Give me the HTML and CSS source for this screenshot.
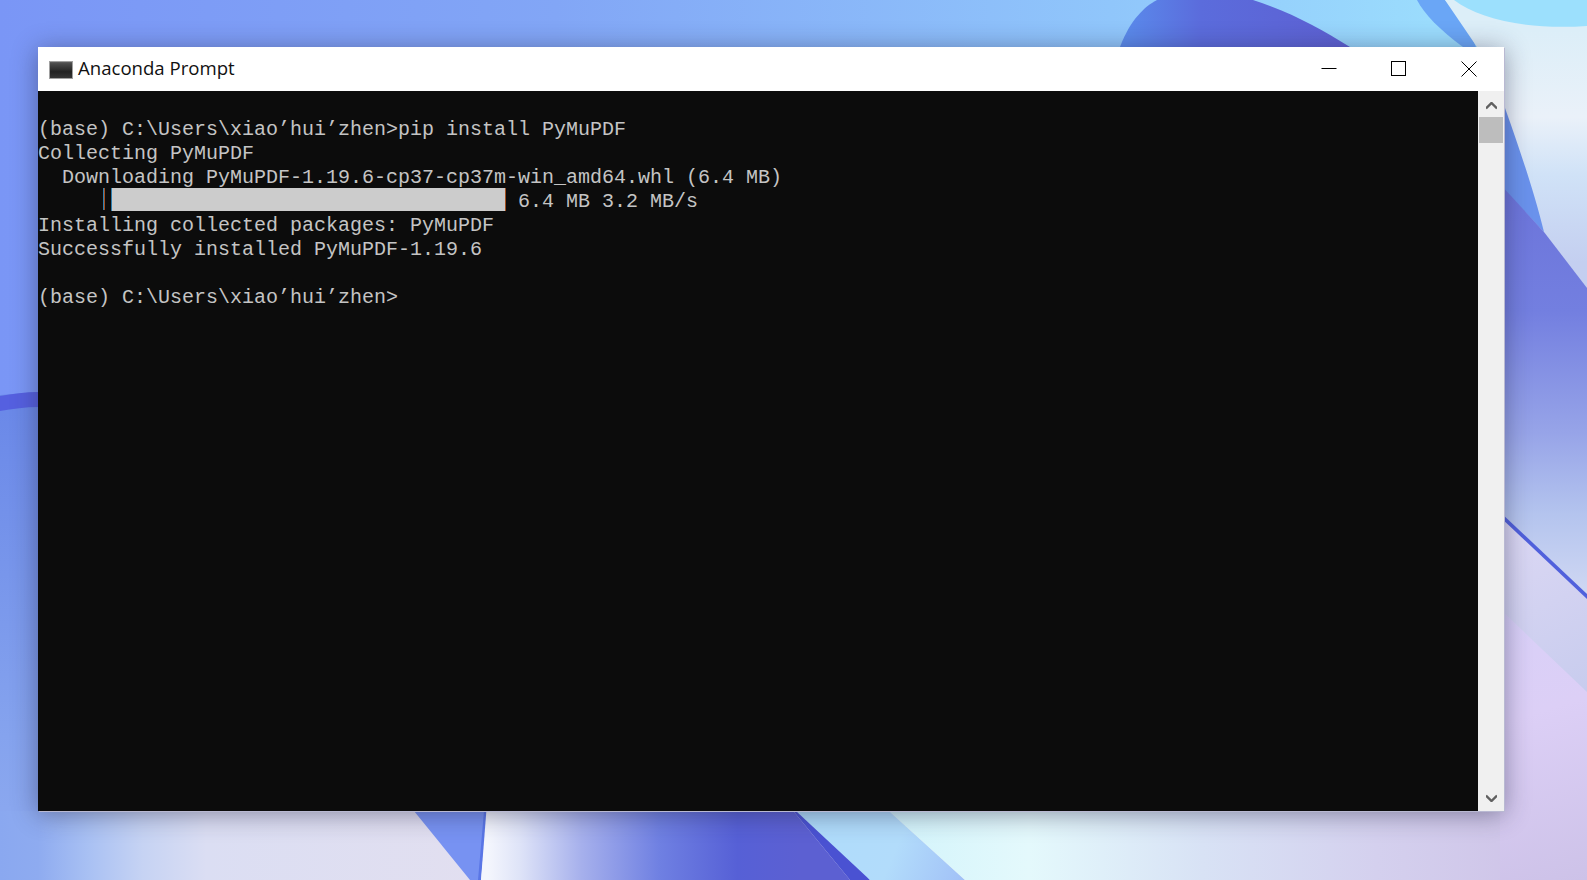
FILE: index.html
```html
<!DOCTYPE html>
<html lang="en">
<head>
<meta charset="utf-8">
<title>Anaconda Prompt</title>
<link rel="stylesheet" href="styles.css">
</head>
<body>
<svg class="wallpaper" viewBox="0 0 1587 880" width="1587" height="880" aria-hidden="true">
  <defs>
    <linearGradient id="top" x1="0" x2="1587" y1="0" y2="0" gradientUnits="userSpaceOnUse">
      <stop offset="0" stop-color="#7a96f6"/><stop offset=".35" stop-color="#82a6f6"/><stop offset=".7" stop-color="#90c6fb"/><stop offset=".9" stop-color="#9bdcfd"/>
    </linearGradient>
    <linearGradient id="left" x1="0" x2="0" y1="400" y2="880" gradientUnits="userSpaceOnUse">
      <stop offset="0" stop-color="#6a88e8"/><stop offset=".7" stop-color="#85a3ee"/><stop offset="1" stop-color="#8fabf0"/>
    </linearGradient>
    <linearGradient id="bottom" x1="0" x2="1587" y1="0" y2="0" gradientUnits="userSpaceOnUse">
      <stop offset="0" stop-color="#8aa8f0"/><stop offset=".024" stop-color="#8eabf0"/><stop offset=".055" stop-color="#a8c0f3"/><stop offset=".09" stop-color="#c6d3f3"/><stop offset=".13" stop-color="#dbdef3"/><stop offset=".3" stop-color="#e2dff0"/>
    </linearGradient>
    <linearGradient id="mid" x1="488" x2="800" y1="0" y2="0" gradientUnits="userSpaceOnUse">
      <stop offset="0" stop-color="#f4f6fd"/><stop offset=".1" stop-color="#dfe4f8"/><stop offset=".3" stop-color="#a6b0ec"/><stop offset=".55" stop-color="#6f80e2"/><stop offset=".8" stop-color="#5660d6"/><stop offset="1" stop-color="#5c60d2"/>
    </linearGradient>
    <linearGradient id="sky" x1="796" x2="960" y1="811" y2="880" gradientUnits="userSpaceOnUse">
      <stop offset="0" stop-color="#aedcfb"/><stop offset=".6" stop-color="#b2dcfb"/><stop offset="1" stop-color="#a2c2f7"/>
    </linearGradient>
    <linearGradient id="foot" x1="889" x2="1587" y1="0" y2="0" gradientUnits="userSpaceOnUse">
      <stop offset="0" stop-color="#d2f4fb"/><stop offset=".2" stop-color="#e4f9fc"/><stop offset=".45" stop-color="#d8e2f5"/><stop offset=".7" stop-color="#d4d0ee"/><stop offset="1" stop-color="#cdc0e6"/>
    </linearGradient>
    <linearGradient id="blob" x1="1120" x2="1350" y1="0" y2="0" gradientUnits="userSpaceOnUse">
      <stop offset="0" stop-color="#5a8cec"/><stop offset=".35" stop-color="#5b6cdc"/><stop offset="1" stop-color="#5d60d2"/>
    </linearGradient>
    <linearGradient id="pale" x1="0" x2="0" y1="30" y2="320" gradientUnits="userSpaceOnUse">
      <stop offset="0" stop-color="#dceef8"/><stop offset=".3" stop-color="#eaf1f9"/><stop offset=".5" stop-color="#d0e2f7"/><stop offset=".8" stop-color="#c4cff0"/><stop offset="1" stop-color="#c4cdf0"/>
    </linearGradient>
    <linearGradient id="violet" x1="0" x2="0" y1="190" y2="595" gradientUnits="userSpaceOnUse">
      <stop offset="0" stop-color="#6c74da"/><stop offset=".3" stop-color="#737fe0"/><stop offset=".6" stop-color="#97a4e8"/><stop offset=".8" stop-color="#b4c4ee"/><stop offset="1" stop-color="#d0d8f3"/>
    </linearGradient>
    <linearGradient id="lilac" x1="1504" x2="1587" y1="600" y2="880" gradientUnits="userSpaceOnUse">
      <stop offset="0" stop-color="#d8d0f8"/><stop offset=".4" stop-color="#dccff6"/><stop offset="1" stop-color="#cdc2e8"/>
    </linearGradient>
    <linearGradient id="haze" x1="1504" x2="1587" y1="520" y2="690" gradientUnits="userSpaceOnUse">
      <stop offset="0" stop-color="#dcd8f4"/><stop offset="1" stop-color="#c8ccee"/>
    </linearGradient>
  </defs>
  <rect width="1587" height="880" fill="url(#top)"/>
  <path d="M0 395 L38 392 L38 880 L0 880Z" fill="url(#left)"/>
  <path d="M0 396 C12 394 26 392 38 392 L38 407 C26 407 12 409 0 411Z" fill="#5560e0"/>
  <rect y="811" width="1587" height="69" fill="url(#bottom)"/>
  <path d="M414 811 L470 880 L480 880 L488 811Z" fill="#7792f2"/>
  <path d="M484 811 L488 811 L481 880 L478 880Z" fill="#5a76e6"/>
  <path d="M488 790 H776 L850 880 H481Z" fill="url(#mid)"/>
  <path d="M776 790 H796 L870 880 H850Z" fill="#4a52d2"/>
  <path d="M796 811 H889 L965 880 H870Z" fill="url(#sky)"/>
  <path d="M889 811 H1587 V880 H965Z" fill="url(#foot)"/>
  <path d="M1120 47 C1130 20 1145 6 1157 0 L1253 0 C1290 12 1320 28 1350 47Z" fill="url(#blob)"/>
  <path d="M1417 0 L1445 0 C1462 20 1472 35 1477 50 L1463 47 C1440 30 1424 14 1417 0Z" fill="#6aa6f6"/>
  <path d="M1445 0 H1587 V320 H1504 L1477 47Z" fill="url(#pale)"/>
  <path d="M1454 0 C1480 20 1530 30 1587 26 V0Z" fill="#9ce0fd"/>
  <path d="M1470 47 L1477 47 C1490 70 1500 90 1505 108 C1520 150 1535 195 1544 232 L1504 190Z" fill="#6a92ec"/>
  <path d="M1500 184 L1544 232 L1587 288 V600 L1500 515Z" fill="url(#violet)"/>
  <path d="M1500 515 L1587 597 V880 H1500Z" fill="url(#haze)"/>
  <path d="M1500 609 L1587 692 V880 H1500Z" fill="url(#lilac)"/>
  <path d="M1500 512 L1587 594 V599 L1500 517Z" fill="#5060dc"/>
</svg>

<main class="window">
  <header class="titlebar">
    <div class="app-icon"></div>
    <h1 class="title">Anaconda Prompt</h1>
    <div class="controls">
      <button class="control" aria-label="Minimize">
        <svg width="16" height="16" viewBox="0 0 16 16"><path d="M0.5 7.5H15.5" class="glyph"/></svg>
      </button>
      <button class="control" aria-label="Maximize">
        <svg width="16" height="16" viewBox="0 0 16 16"><rect x="0.5" y="0.5" width="14" height="14" class="glyph"/></svg>
      </button>
      <button class="control" aria-label="Close">
        <svg width="16" height="16" viewBox="0 0 16 16"><path d="M0.5 0.5L15.5 15.5M15.5 0.5L0.5 15.5" class="glyph"/></svg>
      </button>
    </div>
  </header>
  <div class="content">
    <section class="console">
      <div class="row"> </div>
      <div class="row">(base) C:\Users\xiao’hui’zhen&gt;pip install PyMuPDF</div>
      <div class="row">Collecting PyMuPDF</div>
      <div class="row">  Downloading PyMuPDF-1.19.6-cp37-cp37m-win_amd64.whl (6.4 MB)</div>
      <div class="row progress-row"><span class="pipe"></span><span class="bar"></span><span class="rate">6.4 MB 3.2 MB/s</span></div>
      <div class="row">Installing collected packages: PyMuPDF</div>
      <div class="row">Successfully installed PyMuPDF-1.19.6</div>
      <div class="row"> </div>
      <div class="row">(base) C:\Users\xiao’hui’zhen&gt;</div>
    </section>
    <aside class="scrollbar">
      <svg class="arrow arrow-up" width="11" height="8" viewBox="0 0 11 8"><path d="M0 6.5L5.5 1L11 6.5" class="chevron"/></svg>
      <div class="thumb"></div>
      <div class="track"></div>
      <svg class="arrow arrow-down" width="11" height="8" viewBox="0 0 11 8"><path d="M0 1.5L5.5 7L11 1.5" class="chevron"/></svg>
    </aside>
  </div>
</main>
</body>
</html>
```

FILE: styles.css
```css
html, body {
  margin: 0;
  padding: 0;
  width: 1587px;
  height: 880px;
  overflow: hidden;
  background: #7a96f6;
}

.wallpaper {
  position: absolute;
  left: 0;
  top: 0;
  display: block;
}

.window {
  position: absolute;
  left: 38px;
  top: 47px;
  width: 1466px;
  height: 764px;
  display: flex;
  flex-direction: column;
  background: #fff;
  box-shadow: 1px 1px 0 #b9b9d2, 0 3px 24px rgba(40, 40, 70, .48);
}

.titlebar {
  height: 44px;
  flex: none;
  display: flex;
  align-items: center;
  padding-left: 11px;
  background: #fff;
}

.app-icon {
  width: 24px;
  height: 18px;
  margin-top: 1px;
  background: linear-gradient(#6a6a6a 0, #4a4a4a 15%, #222 60%, #383838 100%);
  box-shadow: inset 0 0 0 1px #a0a0a0;
  flex: none;
}

.title {
  margin: 0 0 4px 5px;
  font: 400 18.6px "Open Sans", sans-serif;
  color: #111;
  flex: 1;
}

.controls {
  display: flex;
  flex: none;
}

.control {
  width: 70px;
  height: 44px;
  padding: 0;
  border: 0;
  background: none;
  display: flex;
  align-items: center;
  justify-content: center;
}

.glyph {
  fill: none;
  stroke: #000;
  stroke-width: 1;
}

.content {
  flex: 1;
  display: flex;
  min-height: 0;
}

.console {
  flex: 1;
  background: #0c0c0c;
  color: #c4c4c4;
  font: 400 20px/30px "Liberation Mono", monospace;
}

.row {
  height: 24px;
  white-space: pre;
}

.progress-row {
  display: flex;
}

.pipe {
  width: 2px;
  height: 22px;
  margin: 1px 0 0 65px;
  background: linear-gradient(90deg, #2f7fb0 50%, #a5501f 50%);
}

.bar {
  width: 395px;
  height: 23px;
  margin-top: 1px;
  margin-left: 6px;
  background: #cccccc;
  border-left: 1px solid #2f7fb0;
  border-right: 1px solid #a5501f;
  box-sizing: border-box;
}

.rate {
  margin-left: 12px;
}

.scrollbar {
  width: 26px;
  flex: none;
  background: #f0f0f0;
  display: flex;
  flex-direction: column;
  align-items: center;
}

.arrow {
  flex: none;
  display: block;
}

.arrow-up {
  margin: 11px 0 7px 0;
}

.arrow-down {
  margin: 0 0 9px 0;
}

.chevron {
  fill: none;
  stroke: #606060;
  stroke-width: 2.4;
}

.thumb {
  width: 24px;
  height: 26px;
  background: #bdbdbd;
  flex: none;
}

.track {
  flex: 1;
}
```
